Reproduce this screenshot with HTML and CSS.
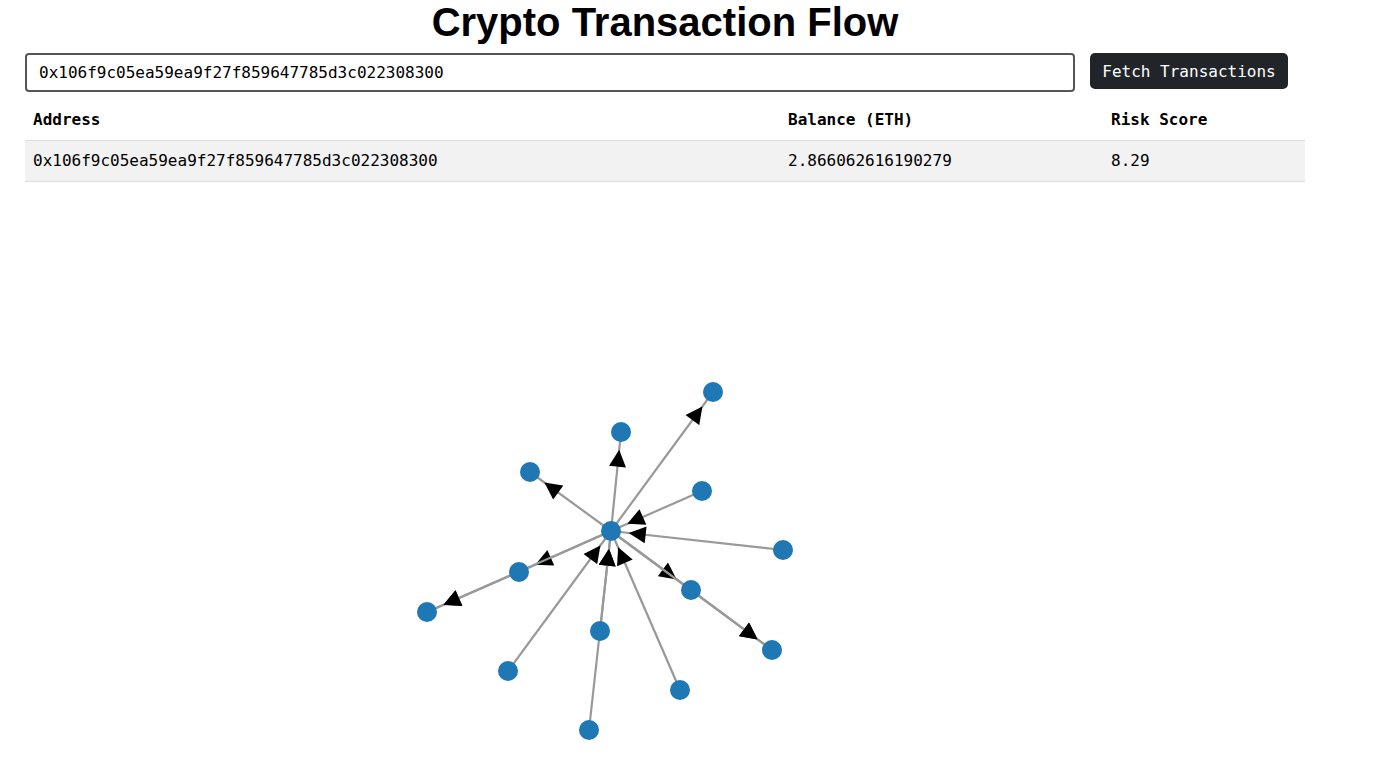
FILE: index.html
```html
<!DOCTYPE html>
<html>
<head>
<meta charset="utf-8">
<title>Crypto Transaction Flow</title>
<link rel="stylesheet" href="styles.css">
</head>
<body>
<div class="app">
  <h1 class="title">Crypto Transaction Flow</h1>
  <div class="search">
    <input class="address-input" type="text" value="0x106f9c05ea59ea9f27f859647785d3c022308300">
    <button class="fetch-btn">Fetch Transactions</button>
  </div>
  <table class="wallet-table">
    <thead>
      <tr><th class="col-addr">Address</th><th class="col-bal">Balance (ETH)</th><th>Risk Score</th></tr>
    </thead>
    <tbody>
      <tr><td>0x106f9c05ea59ea9f27f859647785d3c022308300</td><td>2.866062616190279</td><td>8.29</td></tr>
    </tbody>
  </table>
  <svg class="graph" width="1280" height="575" viewBox="25 191 1280 575">
    <defs>
      <marker id="arrow" viewBox="0 -5 10 10" refX="20.5" refY="0" markerWidth="18" markerHeight="17" markerUnits="userSpaceOnUse" orient="auto">
        <path d="M0,-5L10,0L0,5Z" fill="#000"/>
      </marker>
    </defs>
    <g class="links">
      <line x1="611" y1="531" x2="713" y2="392" marker-end="url(#arrow)"/>
      <line x1="611" y1="531" x2="621" y2="432" marker-end="url(#arrow)"/>
      <line x1="611" y1="531" x2="530" y2="472" marker-end="url(#arrow)"/>
      <line x1="702" y1="491" x2="611" y2="531" marker-end="url(#arrow)"/>
      <line x1="783" y1="550" x2="611" y2="531" marker-end="url(#arrow)"/>
      <line x1="611" y1="531" x2="519" y2="572" marker-end="url(#arrow)"/>
      <line x1="611" y1="531" x2="427" y2="612" marker-end="url(#arrow)"/>
      <line x1="519" y1="572" x2="427" y2="612" marker-end="url(#arrow)"/>
      <line x1="611" y1="531" x2="691" y2="590" marker-end="url(#arrow)"/>
      <line x1="611" y1="531" x2="772" y2="650" marker-end="url(#arrow)"/>
      <line x1="691" y1="590" x2="772" y2="650" marker-end="url(#arrow)"/>
      <line x1="600" y1="631" x2="611" y2="531" marker-end="url(#arrow)"/>
      <line x1="589" y1="730" x2="611" y2="531" marker-end="url(#arrow)"/>
      <line x1="508" y1="671" x2="611" y2="531" marker-end="url(#arrow)"/>
      <line x1="680" y1="690" x2="611" y2="531" marker-end="url(#arrow)"/>
    </g>
    <g class="nodes">
      <circle cx="611" cy="531" r="10"/>
      <circle cx="713" cy="392" r="10"/>
      <circle cx="621" cy="432" r="10"/>
      <circle cx="530" cy="472" r="10"/>
      <circle cx="702" cy="491" r="10"/>
      <circle cx="783" cy="550" r="10"/>
      <circle cx="519" cy="572" r="10"/>
      <circle cx="427" cy="612" r="10"/>
      <circle cx="691" cy="590" r="10"/>
      <circle cx="772" cy="650" r="10"/>
      <circle cx="600" cy="631" r="10"/>
      <circle cx="508" cy="671" r="10"/>
      <circle cx="680" cy="690" r="10"/>
      <circle cx="589" cy="730" r="10"/>
    </g>
  </svg>
</div>
</body>
</html>
```

FILE: styles.css
```css
html, body {
  margin: 0;
  padding: 0;
  background: #fff;
}
body {
  font-family: "DejaVu Sans Mono", "Liberation Mono", monospace;
  font-size: 16px;
  color: #000;
}
.app {
  width: 1280px;
  margin-left: 25px;
}
.title {
  font-family: "Liberation Sans", Arial, sans-serif;
  font-size: 40px;
  font-weight: bold;
  text-align: center;
  margin: 0;
  line-height: 44px;
}
.search {
  display: flex;
  align-items: flex-start;
  gap: 15px;
  margin-top: 9px;
}
.address-input {
  box-sizing: border-box;
  width: 1050px;
  height: 39px;
  border: 2px solid #555;
  border-radius: 4px;
  padding: 0 12px;
  font-family: "DejaVu Sans Mono", "Liberation Mono", monospace;
  font-size: 16px;
  color: #000;
  outline: none;
}
.fetch-btn {
  box-sizing: border-box;
  width: 198px;
  height: 36px;
  border: none;
  border-radius: 5px;
  background: #212529;
  color: #fff;
  font-family: "DejaVu Sans Mono", "Liberation Mono", monospace;
  font-size: 16px;
  padding: 0;
}
.wallet-table {
  width: 1280px;
  border-collapse: collapse;
  margin-top: 8px;
}
.wallet-table th,
.wallet-table td {
  text-align: left;
  padding: 10px 8px;
  line-height: 20px;
  border-bottom: 1px solid #ddd;
}
.wallet-table th {
  font-weight: bold;
}
.wallet-table tbody tr {
  background: #f2f2f2;
}
.col-addr { width: 739px; }
.col-bal { width: 307px; }
.graph {
  display: block;
  margin-top: 9px;
}
.links line {
  stroke: #999;
  stroke-width: 2.2;
}
.nodes circle {
  fill: #1f77b4;
}
```
